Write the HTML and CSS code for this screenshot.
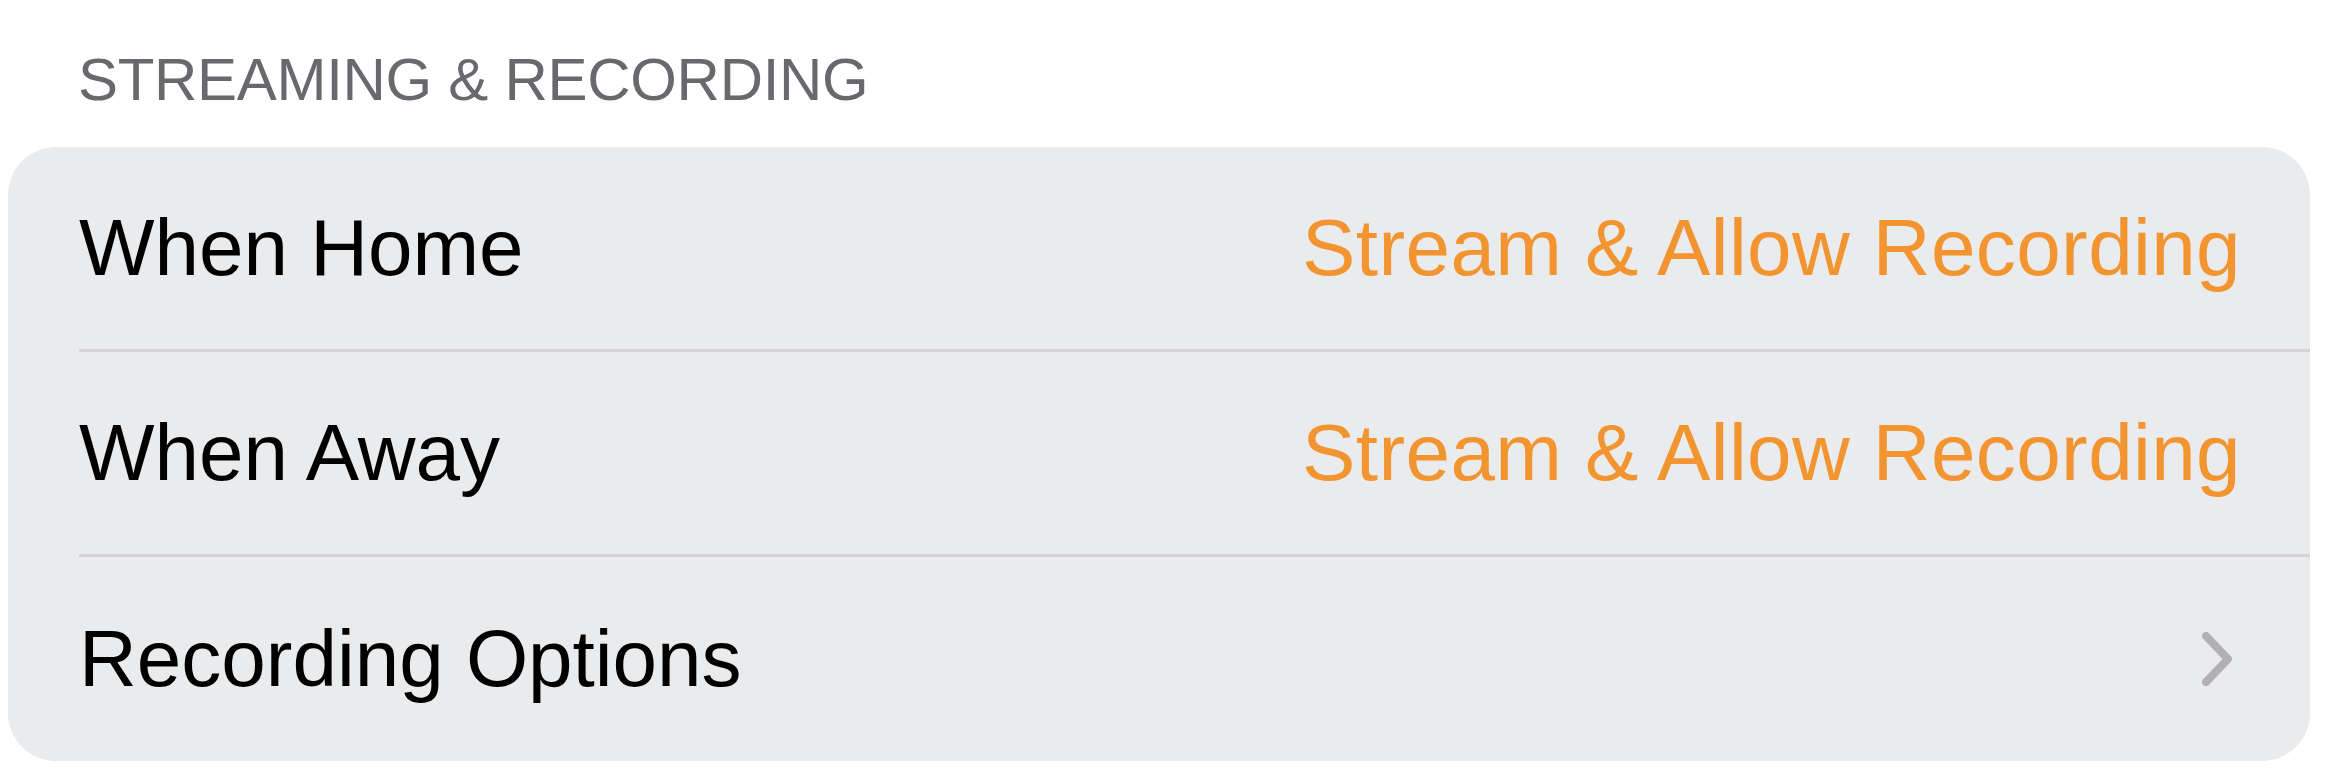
FILE: index.html
```html
<!DOCTYPE html>
<html lang="en">
<head>
  <meta charset="UTF-8">
  <meta name="viewport" content="width=device-width, initial-scale=1.0">
  <title>Streaming &amp; Recording</title>
  <link rel="stylesheet" href="styles.css">
</head>
<body>
  <!-- Streaming settings group -->
  <section class="settings-group">
    <h2 class="group-title">STREAMING &amp; RECORDING</h2>

    <div class="group-card">
      <div class="row">
        <div class="row-body">
          <span class="row-label">When Home</span>
          <span class="row-value">Stream &amp; Allow Recording</span>
        </div>
      </div>
      <div class="row">
        <div class="row-body">
          <span class="row-label">When Away</span>
          <span class="row-value">Stream &amp; Allow Recording</span>
        </div>
      </div>
      <div class="row">
        <div class="row-body">
          <span class="row-label">Recording Options</span>
          <svg class="chevron" width="30" height="54" viewBox="0 0 30 54">
            <polyline points="4,4 26,27 4,50" />
          </svg>
        </div>
      </div>
    </div>
  </section>
</body>
</html>
```

FILE: styles.css
```css
:root {
  --page-bg: #ffffff;
  --card-bg: #eaebed;
  --separator: #d4d4d7;
  --label-color: #000000;
  --title-color: #68686d;
  --accent: #f2942f;
  --chevron: #b1b1b5;
}

body {
  margin: 0;
  background-color: var(--page-bg);
  font-family: "Liberation Sans", Arial, sans-serif;
}

.settings-group {
  padding: 44px 36px 0 8px;
}

.group-title {
  margin: 0 0 31px;
  padding-left: 70px;
  font-size: 60px;
  font-weight: 400;
  line-height: 72px;
  letter-spacing: -0.3px;
  color: var(--title-color);
}

.group-card {
  background-color: var(--card-bg);
  border-radius: 48px;
  overflow: hidden;
}

.row {
  padding-left: 71px;
}

.row-body {
  display: flex;
  justify-content: space-between;
  align-items: center;
  height: 202px;
  padding-right: 69px;
  border-bottom: 3px solid var(--separator);
}

.row:last-child .row-body {
  height: 204px;
  border-bottom: none;
}

.row-label {
  font-size: 80px;
  color: var(--label-color);
}

.row-value {
  font-size: 80px;
  letter-spacing: 0.4px;
  color: var(--accent);
}

.chevron {
  margin-right: 9px;
  fill: none;
  stroke: var(--chevron);
  stroke-width: 8;
  stroke-linecap: round;
  stroke-linejoin: round;
}
```
